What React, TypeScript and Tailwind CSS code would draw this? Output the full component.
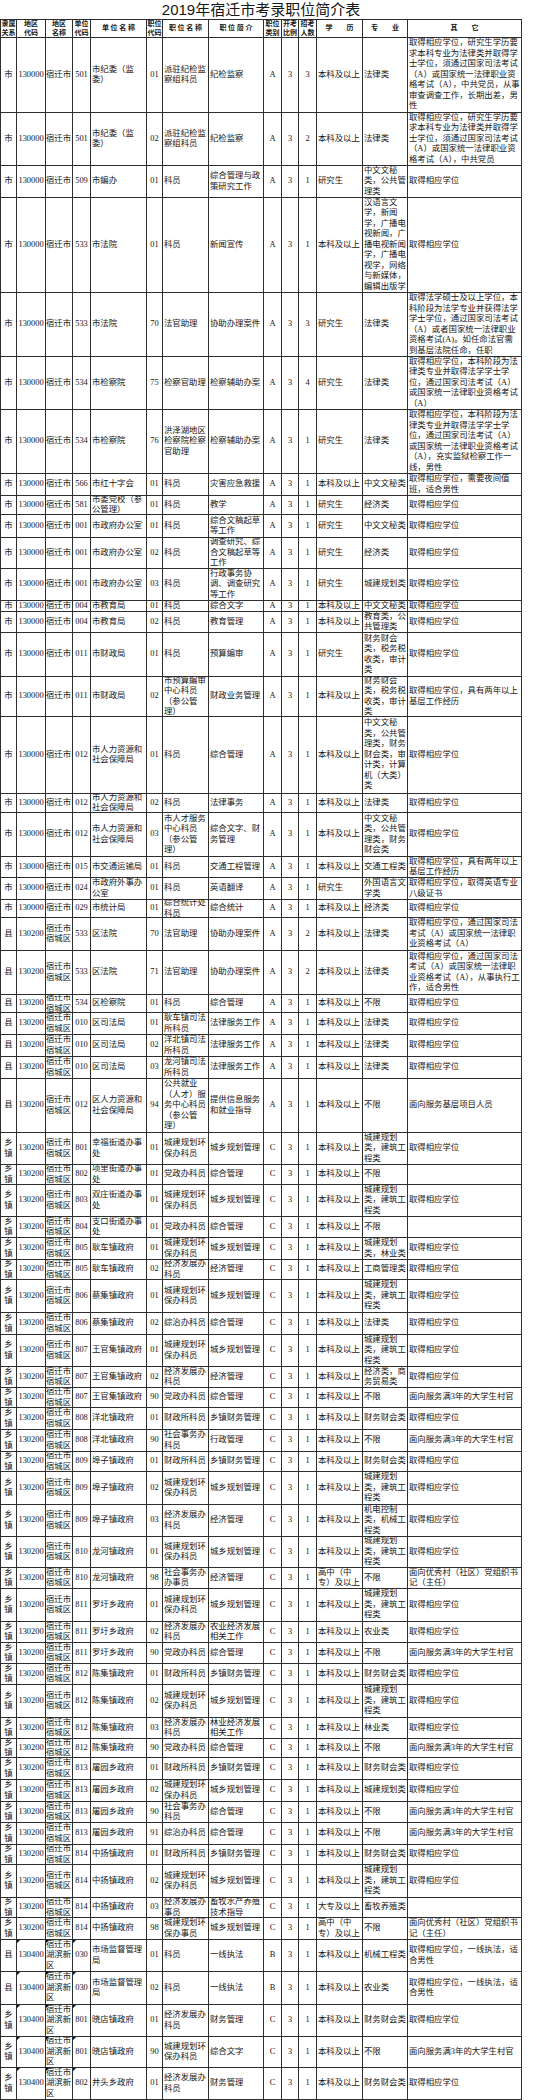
import React from "react";

// 2019年宿迁市考录职位简介表 — one string per row, pipe separated, last field = row height (px)
const data = `市|130000|宿迁市|501|市纪委（监委）|01|派驻纪检监察组科员|纪检监察|A|3|3|本科及以上|法律类|取得相应学位，研究生学历要求本科专业为法律类并取得学士学位，须通过国家司法考试（A）或国家统一法律职业资格考试（A），中共党员，从事审查调查工作，长期出差，男性|75
市|130000|宿迁市|501|市纪委（监委）|02|派驻纪检监察组科员|纪检监察|A|3|2|本科及以上|法律类|取得相应学位，研究生学历要求本科专业为法律类并取得学士学位，须通过国家司法考试（A）或国家统一法律职业资格考试（A），中共党员|53
市|130000|宿迁市|509|市编办|01|科员|综合管理与政策研究工作|A|3|1|研究生|中文文秘类，公共管理类|取得相应学位|32
市|130000|宿迁市|533|市法院|01|科员|新闻宣传|A|3|1|本科及以上|汉语言文学，新闻学，广播电视新闻，广播电视新闻学，广播电视学，网络与新媒体，编辑出版学|取得相应学位|95
市|130000|宿迁市|533|市法院|70|法官助理|协助办理案件|A|3|3|研究生|法律类|取得法学硕士及以上学位，本科阶段为法学专业并获得法学学士学位，通过国家司法考试（A）或者国家统一法律职业资格考试(A)。如任命法官需到基层法院任命，任职|64
市|130000|宿迁市|534|市检察院|75|检察官助理|检察辅助办案|A|3|4|研究生|法律类|取得相应学位，本科阶段为法律类专业并取得法学学士学位，通过国家司法考试（A）或国家统一法律职业资格考试（A）|53
市|130000|宿迁市|534|市检察院|76|洪泽湖地区检察院检察官助理|检察辅助办案|A|3|1|研究生|法律类|取得相应学位，本科阶段为法律类专业并取得法学学士学位，通过国家司法考试（A）或国家统一法律职业资格考试（A），充实监狱检察工作一线，男性|64
市|130000|宿迁市|566|市红十字会|01|科员|灾害应急救援|A|3|1|本科及以上|中文文秘类|取得相应学位，需要夜间值班，适合男性|22
市|130000|宿迁市|581|市委党校（参公管理）|01|科员|教学|A|3|1|研究生|经济类|取得相应学位|19
市|130000|宿迁市|001|市政府办公室|01|科员|综合文稿起草等工作|A|3|1|研究生|中文文秘类|取得相应学位|23
市|130000|宿迁市|001|市政府办公室|02|科员|调查研究、综合文稿起草等工作|A|3|1|研究生|经济类|取得相应学位|31
市|130000|宿迁市|001|市政府办公室|03|科员|行政事务协调、调查研究等工作|A|3|1|研究生|城建规划类|取得相应学位|32
市|130000|宿迁市|004|市教育局|01|科员|综合文字|A|3|1|本科及以上|中文文秘类|取得相应学位|11
市|130000|宿迁市|004|市教育局|02|科员|教育管理|A|3|1|本科及以上|教育类，公共管理类|取得相应学位|21
市|130000|宿迁市|011|市财政局|01|科员|预算编审|A|3|1|研究生|财务财会类，税务税收类，审计类|取得相应学位|44
市|130000|宿迁市|011|市财政局|02|市预算编审中心科员（参公管理）|财政业务管理|A|3|1|本科及以上|财务财会类，税务税收类，审计类|取得相应学位，具有两年以上基层工作经历|40
市|130000|宿迁市|012|市人力资源和社会保障局|01|科员|综合管理|A|3|1|本科及以上|中文文秘类，公共管理类，财务财会类，审计类，计算机（大类）类|取得相应学位|77
市|130000|宿迁市|012|市人力资源和社会保障局|02|科员|法律事务|A|3|1|本科及以上|法律类|取得相应学位|19
市|130000|宿迁市|012|市人力资源和社会保障局|03|市人才服务中心科员（参公管理）|综合文字、财务管理|A|3|1|本科及以上|中文文秘类，公共管理类，财务财会类|取得相应学位|44
市|130000|宿迁市|015|市交通运输局|01|科员|交通工程管理|A|3|1|本科及以上|交通工程类|取得相应学位，具有两年以上基层工作经历|21
市|130000|宿迁市|024|市政府外事办公室|01|科员|英语翻译|A|3|1|研究生|外国语言文学类|取得相应学位，取得英语专业八级证书|22
市|130000|宿迁市|029|市统计局|01|综合统计处科员|综合统计|A|3|1|本科及以上|经济类|取得相应学位|18
县|130200|宿迁市宿城区|533|区法院|70|法官助理|协助办理案件|A|3|2|本科及以上|法律类|取得相应学位，通过国家司法考试（A）或国家统一法律职业资格考试（A）|33
县|130200|宿迁市宿城区|533|区法院|71|法官助理|协助办理案件|A|3|2|本科及以上|法律类|取得相应学位，通过国家司法考试（A）或国家统一法律职业资格考试（A），从事执行工作，适合男性|44
县|130200|宿迁市宿城区|534|区检察院|01|科员|综合管理|A|3|1|本科及以上|不限|取得相应学位|18
县|130200|宿迁市宿城区|010|区司法局|01|耿车镇司法所科员|法律服务工作|A|3|1|本科及以上|法律类|取得相应学位|22
县|130200|宿迁市宿城区|010|区司法局|02|洋北镇司法所科员|法律服务工作|A|3|1|本科及以上|法律类|取得相应学位|22
县|130200|宿迁市宿城区|010|区司法局|03|龙河镇司法所科员|法律服务工作|A|3|1|本科及以上|法律类|取得相应学位|22
县|130200|宿迁市宿城区|012|区人力资源和社会保障局|94|公共就业（人才）服务中心科员（参公管理）|提供信息服务和就业指导|A|3|1|本科及以上|不限|面向服务基层项目人员|54
乡镇|130200|宿迁市宿城区|801|幸福街道办事处|01|城建规划环保办科员|城乡规划管理|C|3|1|本科及以上|城建规划类，建筑工程类|取得相应学位|32
乡镇|130200|宿迁市宿城区|802|项里街道办事处|01|党政办科员|综合管理|C|3|1|本科及以上|不限||20
乡镇|130200|宿迁市宿城区|803|双庄街道办事处|01|城建规划环保办科员|城乡规划管理|C|3|1|本科及以上|城建规划类，建筑工程类|取得相应学位|32
乡镇|130200|宿迁市宿城区|804|支口街道办事处|01|党政办科员|综合管理|C|3|1|本科及以上|不限||21
乡镇|130200|宿迁市宿城区|805|耿车镇政府|01|城建规划环保办科员|城乡规划管理|C|3|1|本科及以上|城建规划类，林业类|取得相应学位|22
乡镇|130200|宿迁市宿城区|805|耿车镇政府|02|经济发展办科员|经济管理|C|3|1|本科及以上|工商管理类|取得相应学位|20
乡镇|130200|宿迁市宿城区|806|蔡集镇政府|01|城建规划环保办科员|城乡规划管理|C|3|1|本科及以上|城建规划类，建筑工程类|取得相应学位|33
乡镇|130200|宿迁市宿城区|806|蔡集镇政府|02|综治办科员|综合管理|C|3|1|本科及以上|法律类|取得相应学位|22
乡镇|130200|宿迁市宿城区|807|王官集镇政府|01|城建规划环保办科员|城乡规划管理|C|3|1|本科及以上|城建规划类，建筑工程类|取得相应学位|32
乡镇|130200|宿迁市宿城区|807|王官集镇政府|02|经济发展办科员|经济管理|C|3|1|本科及以上|经济类，商务贸易类|取得相应学位|21
乡镇|130200|宿迁市宿城区|807|王官集镇政府|90|党政办科员|综合管理|C|3|1|本科及以上|不限|面向服务满3年的大学生村官|20
乡镇|130200|宿迁市宿城区|808|洋北镇政府|01|财政所科员|乡镇财务管理|C|3|1|本科及以上|财务财会类|取得相应学位|22
乡镇|130200|宿迁市宿城区|808|洋北镇政府|90|社会事务办科员|行政管理|C|3|1|本科及以上|不限|面向服务满3年的大学生村官|22
乡镇|130200|宿迁市宿城区|809|埠子镇政府|01|财政所科员|乡镇财务管理|C|3|1|本科及以上|财务财会类|取得相应学位|20
乡镇|130200|宿迁市宿城区|809|埠子镇政府|02|城建规划环保办科员|城乡规划管理|C|3|1|本科及以上|城建规划类，建筑工程类|取得相应学位|33
乡镇|130200|宿迁市宿城区|809|埠子镇政府|03|经济发展办科员|经济管理|C|3|1|本科及以上|机电控制类，机械工程类|取得相应学位|32
乡镇|130200|宿迁市宿城区|810|龙河镇政府|01|城建规划环保办科员|城乡规划管理|C|3|1|本科及以上|城建规划类，建筑工程类|取得相应学位|31
乡镇|130200|宿迁市宿城区|810|龙河镇政府|98|社会事务办办事员|经济管理|C|3|1|高中（中专）及以上|不限|面向优秀村（社区）党组织书记（主任）|21
乡镇|130200|宿迁市宿城区|811|罗圩乡政府|01|城建规划环保办科员|城乡规划管理|C|3|1|本科及以上|城建规划类，建筑工程类|取得相应学位|33
乡镇|130200|宿迁市宿城区|811|罗圩乡政府|02|经济发展办科员|农业经济发展相关工作|C|3|1|本科及以上|农业类|取得相应学位|21
乡镇|130200|宿迁市宿城区|811|罗圩乡政府|90|党政办科员|综合管理|C|3|1|本科及以上|不限|面向服务满3年的大学生村官|21
乡镇|130200|宿迁市宿城区|812|陈集镇政府|01|财政所科员|乡镇财务管理|C|3|1|本科及以上|财务财会类|取得相应学位|21
乡镇|130200|宿迁市宿城区|812|陈集镇政府|02|城建规划环保办科员|城乡规划管理|C|3|1|本科及以上|城建规划类，建筑工程类|取得相应学位|33
乡镇|130200|宿迁市宿城区|812|陈集镇政府|03|经济发展办科员|林业经济发展相关工作|C|3|1|本科及以上|林业类|取得相应学位|21
乡镇|130200|宿迁市宿城区|812|陈集镇政府|90|党政办科员|综合管理|C|3|1|本科及以上|不限|面向服务满3年的大学生村官|19
乡镇|130200|宿迁市宿城区|813|屠园乡政府|01|财政所科员|乡镇财务管理|C|3|1|本科及以上|财务财会类|取得相应学位|22
乡镇|130200|宿迁市宿城区|813|屠园乡政府|02|城建规划环保办科员|城乡规划管理|C|3|1|本科及以上|城建规划类|取得相应学位|22
乡镇|130200|宿迁市宿城区|813|屠园乡政府|90|社会事务办科员|综合管理|C|3|1|本科及以上|不限|面向服务满3年的大学生村官|21
乡镇|130200|宿迁市宿城区|813|屠园乡政府|91|综治办科员|综合管理|C|3|1|本科及以上|不限|面向服务满3年的大学生村官|22
乡镇|130200|宿迁市宿城区|814|中扬镇政府|01|财政所科员|乡镇财务管理|C|3|1|本科及以上|财务财会类|取得相应学位|20
乡镇|130200|宿迁市宿城区|814|中扬镇政府|02|城建规划环保办科员|城乡规划管理|C|3|1|本科及以上|城建规划类，建筑工程类|取得相应学位|33
乡镇|130200|宿迁市宿城区|814|中扬镇政府|03|经济发展办事员|畜牧水产养殖技术指导|C|3|1|大专及以上|畜牧养殖类||20
乡镇|130200|宿迁市宿城区|814|中扬镇政府|98|城建规划环保办事员|城乡规划管理|C|3|1|高中（中专）及以上|不限|面向优秀村（社区）党组织书记（主任）|22
县|130400|宿迁市湖滨新区|030|市场监督管理局|01|科员|一线执法|B|3|1|本科及以上|机械工程类|取得相应学位，一线执法，适合男性|32
县|130400|宿迁市湖滨新区|030|市场监督管理局|02|科员|一线执法|B|3|1|本科及以上|农业类|取得相应学位，一线执法，适合男性|33
乡镇|130400|宿迁市湖滨新区|801|晓店镇政府|01|经济发展办科员|财务管理|C|3|1|本科及以上|财务财会类|取得相应学位|32
乡镇|130400|宿迁市湖滨新区|801|晓店镇政府|90|城建规划环保办科员|综合文字|C|3|1|本科及以上|不限|面向服务满3年的大学生村官|31
乡镇|130400|宿迁市湖滨新区|802|井头乡政府|01|经济发展办科员|财务管理|C|3|1|本科及以上|财务财会类|取得相应学位|32`;

const rows = data.split("\n").map((line) => line.split("|"));

const headers = [
  "隶属\n关系",
  "地区\n代码",
  "地区\n名称",
  "单位\n代码",
  "单 位 名 称",
  "职位\n代码",
  "职 位 名 称",
  "职 位 简 介",
  "职位\n类别",
  "开考\n比例",
  "招考\n人数",
  "学　　历",
  "专　　业",
  "其　　它",
];

const align = [
  "justify-center text-center",
  "justify-center text-center",
  "justify-start text-left",
  "justify-center text-center",
  "justify-start text-left pl-px",
  "justify-center text-center",
  "justify-start text-left pl-px",
  "justify-start text-left pl-px",
  "justify-center text-center",
  "justify-center text-center",
  "justify-center text-center",
  "justify-start text-left pl-px",
  "justify-start text-left pl-px",
  "justify-start text-left pl-px",
];

const gridCols =
  "grid grid-cols-[16px_29px_27px_18px_56px_16px_46px_55px_18px_17px_18px_46px_45px_114px]";

export default function App() {
  return (
    <div className="w-[550px] bg-white text-[#161616] font-['Liberation_Serif','Noto_Sans_CJK_SC',serif]">
      <div className="w-[522px] h-[19px] flex items-center justify-center text-[15px] leading-[19px] font-['Liberation_Sans','Noto_Sans_CJK_SC',sans-serif]">
        2019年宿迁市考录职位简介表
      </div>

      <div className="w-[522px]">
        <div className={`${gridCols} h-[19px] border-t border-l border-[#2e2e2e]`}>
          {headers.map((h, i) => (
            <div
              key={i}
              className="flex items-center justify-center text-center border-r border-b border-[#2e2e2e] overflow-hidden font-bold text-[7px] leading-[8.5px] whitespace-pre"
            >
              {h}
            </div>
          ))}
        </div>

        {rows.map((r, ri) => {
          const hubin = r[1] === "130400";
          return (
            <div
              key={ri}
              className={`${gridCols} border-l border-[#2e2e2e]`}
              style={{ height: Number(r[14]) }}
            >
              {r.slice(0, 14).map((cell, ci) => (
                <div
                  key={ci}
                  className={`relative flex items-center overflow-hidden border-r border-b border-[#2e2e2e] text-[8.4px] leading-[10.5px] ${align[ci]}`}
                >
                  {hubin && (ci === 1 || ci === 2 || ci === 3) && (
                    <span className="absolute left-0 top-0 w-0 h-0 border-t-[3px] border-r-[3px] border-t-black border-r-transparent" />
                  )}
                  <span className="block w-full">{cell}</span>
                </div>
              ))}
            </div>
          );
        })}
      </div>
    </div>
  );
}
